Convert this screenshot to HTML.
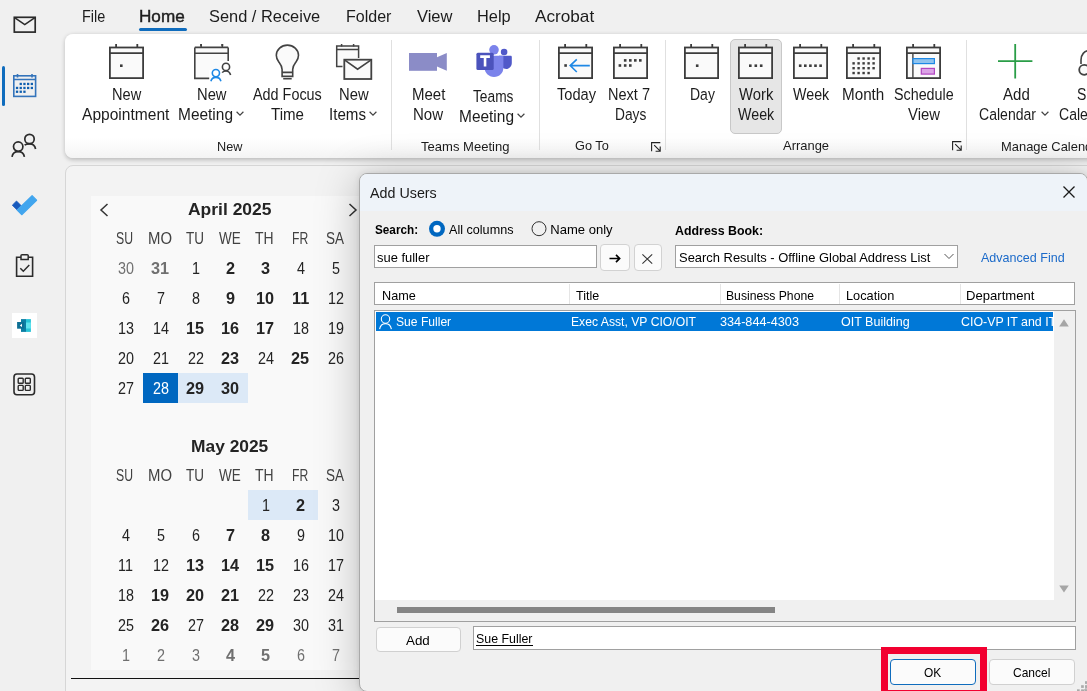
<!DOCTYPE html><html><head><meta charset="utf-8"><style>
html,body{margin:0;padding:0;}
body{width:1087px;height:691px;overflow:hidden;position:relative;background:#f0f0f0;font-family:"Liberation Sans",sans-serif;-webkit-font-smoothing:antialiased;}
.t{position:absolute;white-space:nowrap;transform-origin:0 0;filter:grayscale(1);}
.a{position:absolute;box-sizing:border-box;}
svg{position:absolute;overflow:visible;}
</style></head><body>
<div class="t" style="left:82.00px;top:8.12px;font-size:17.39px;line-height:17.39px;color:#1c1c1c;transform:scaleX(0.8315);">File</div>
<div class="t" style="left:139.10px;top:8.12px;font-size:17.39px;line-height:17.39px;color:#1c1c1c;transform:scaleX(0.9852);-webkit-text-stroke:0.45px #242424;">Home</div>
<div class="a" style="left:139px;top:28px;width:48px;height:3px;background:#0f6cbd;border-radius:1.5px"></div>
<div class="t" style="left:209.20px;top:8.12px;font-size:17.39px;line-height:17.39px;color:#1c1c1c;transform:scaleX(0.9437);">Send / Receive</div>
<div class="t" style="left:345.90px;top:8.12px;font-size:17.39px;line-height:17.39px;color:#1c1c1c;transform:scaleX(0.9231);">Folder</div>
<div class="t" style="left:416.60px;top:8.12px;font-size:17.39px;line-height:17.39px;color:#1c1c1c;transform:scaleX(0.9497);">View</div>
<div class="t" style="left:476.70px;top:8.12px;font-size:17.39px;line-height:17.39px;color:#1c1c1c;transform:scaleX(0.9422);">Help</div>
<div class="t" style="left:535.30px;top:8.12px;font-size:17.39px;line-height:17.39px;color:#1c1c1c;transform:scaleX(0.9878);">Acrobat</div>
<div class="a" style="left:65px;top:34px;width:1040px;height:124px;background:linear-gradient(to bottom,#fff 0%,#fff 84%,#f4f4f4 100%);border-radius:8px;box-shadow:0 1.5px 4px rgba(0,0,0,0.22)"></div>
<div class="a" style="left:391.0px;top:40px;width:1px;height:110px;background:#e0e0e0"></div>
<div class="a" style="left:538.8px;top:40px;width:1px;height:110px;background:#e0e0e0"></div>
<div class="a" style="left:664.9px;top:40px;width:1px;height:110px;background:#e0e0e0"></div>
<div class="a" style="left:966.0px;top:40px;width:1px;height:110px;background:#e0e0e0"></div>
<div class="t" style="left:111.60px;top:87.25px;font-size:15.94px;line-height:15.94px;color:#1c1c1c;transform:scaleX(0.9156);">New</div>
<div class="t" style="left:82.20px;top:107.25px;font-size:15.94px;line-height:15.94px;color:#1c1c1c;transform:scaleX(0.9765);">Appointment</div>
<div class="t" style="left:197.05px;top:87.25px;font-size:15.94px;line-height:15.94px;color:#1c1c1c;transform:scaleX(0.9250);">New</div>
<div class="t" style="left:177.60px;top:107.25px;font-size:15.94px;line-height:15.94px;color:#1c1c1c;transform:scaleX(0.9698);">Meeting</div>
<div class="t" style="left:253.00px;top:87.25px;font-size:15.94px;line-height:15.94px;color:#1c1c1c;transform:scaleX(0.9029);">Add Focus</div>
<div class="t" style="left:271.00px;top:107.25px;font-size:15.94px;line-height:15.94px;color:#1c1c1c;transform:scaleX(0.9474);">Time</div>
<div class="t" style="left:339.30px;top:87.25px;font-size:15.94px;line-height:15.94px;color:#1c1c1c;transform:scaleX(0.9281);">New</div>
<div class="t" style="left:329.00px;top:107.25px;font-size:15.94px;line-height:15.94px;color:#1c1c1c;transform:scaleX(0.9494);">Items</div>
<div class="t" style="left:217.40px;top:139.54px;font-size:13.48px;line-height:13.48px;color:#1c1c1c;transform:scaleX(0.9420);">New</div>
<div class="t" style="left:411.60px;top:87.25px;font-size:15.94px;line-height:15.94px;color:#1c1c1c;transform:scaleX(0.9425);">Meet</div>
<div class="t" style="left:412.70px;top:107.25px;font-size:15.94px;line-height:15.94px;color:#1c1c1c;transform:scaleX(0.9438);">Now</div>
<div class="t" style="left:473.20px;top:89.25px;font-size:15.94px;line-height:15.94px;color:#1c1c1c;transform:scaleX(0.8626);">Teams</div>
<div class="t" style="left:458.70px;top:109.25px;font-size:15.94px;line-height:15.94px;color:#1c1c1c;transform:scaleX(0.9698);">Meeting</div>
<div class="t" style="left:421.20px;top:139.54px;font-size:13.48px;line-height:13.48px;color:#1c1c1c;transform:scaleX(0.9684);">Teams Meeting</div>
<div class="t" style="left:556.60px;top:87.25px;font-size:15.94px;line-height:15.94px;color:#1c1c1c;transform:scaleX(0.9192);">Today</div>
<div class="t" style="left:608.40px;top:87.25px;font-size:15.94px;line-height:15.94px;color:#1c1c1c;transform:scaleX(0.9116);">Next 7</div>
<div class="t" style="left:614.50px;top:107.25px;font-size:15.94px;line-height:15.94px;color:#1c1c1c;transform:scaleX(0.8618);">Days</div>
<div class="t" style="left:575.30px;top:138.54px;font-size:13.48px;line-height:13.48px;color:#1c1c1c;transform:scaleX(0.9464);">Go To</div>
<div class="a" style="left:730px;top:38.5px;width:52px;height:95px;background:#e6e6e6;border:1px solid #c8c8c8;border-radius:5px"></div>
<div class="t" style="left:689.80px;top:87.25px;font-size:15.94px;line-height:15.94px;color:#1c1c1c;transform:scaleX(0.8783);">Day</div>
<div class="t" style="left:739.20px;top:87.25px;font-size:15.94px;line-height:15.94px;color:#1c1c1c;transform:scaleX(0.9295);">Work</div>
<div class="t" style="left:738.20px;top:107.25px;font-size:15.94px;line-height:15.94px;color:#1c1c1c;transform:scaleX(0.8947);">Week</div>
<div class="t" style="left:792.50px;top:87.25px;font-size:15.94px;line-height:15.94px;color:#1c1c1c;transform:scaleX(0.8947);">Week</div>
<div class="t" style="left:842.30px;top:87.25px;font-size:15.94px;line-height:15.94px;color:#1c1c1c;transform:scaleX(0.9548);">Month</div>
<div class="t" style="left:894.20px;top:87.25px;font-size:15.94px;line-height:15.94px;color:#1c1c1c;transform:scaleX(0.8981);">Schedule</div>
<div class="t" style="left:908.10px;top:107.25px;font-size:15.94px;line-height:15.94px;color:#1c1c1c;transform:scaleX(0.9310);">View</div>
<div class="t" style="left:782.60px;top:138.54px;font-size:13.48px;line-height:13.48px;color:#1c1c1c;transform:scaleX(0.9615);">Arrange</div>
<div class="t" style="left:1002.50px;top:87.25px;font-size:15.94px;line-height:15.94px;color:#1c1c1c;transform:scaleX(0.9448);">Add</div>
<div class="t" style="left:979.00px;top:107.25px;font-size:15.94px;line-height:15.94px;color:#1c1c1c;transform:scaleX(0.8811);">Calendar</div>
<div class="t" style="left:1000.70px;top:139.54px;font-size:13.48px;line-height:13.48px;color:#1c1c1c;transform:scaleX(0.9600);">Manage Calendars</div>
<div class="t" style="left:1077.20px;top:87.25px;font-size:15.94px;line-height:15.94px;color:#1c1c1c;transform:scaleX(0.8800);">Share</div>
<div class="t" style="left:1059.10px;top:107.25px;font-size:15.94px;line-height:15.94px;color:#1c1c1c;transform:scaleX(0.8811);">Calendar</div>
<svg style="left:108.5px;top:44.2px" width="36" height="36" viewBox="0 0 36 36"><rect x="0.9" y="3.5" width="33.2" height="30.6" fill="#fafafa" stroke="#3c3c3c" stroke-width="1.8"/><path d="M0.9 9.2H34.1M7.1 0V4M28.3 0V4" stroke="#3c3c3c" stroke-width="1.8" fill="none"/><rect x="11.00" y="20.40" width="2.6" height="2.6" fill="#3c3c3c"/></svg>
<svg style="left:194.4px;top:44.4px" width="36" height="36" viewBox="0 0 36 36"><rect x="0.9" y="3.5" width="33.2" height="30.6" fill="#fafafa" stroke="#3c3c3c" stroke-width="1.8"/><path d="M0.9 9.2H34.1M7.1 0V4M28.3 0V4" stroke="#3c3c3c" stroke-width="1.8" fill="none"/><rect x="0" y="2" width="36" height="34" fill="#fff"/><path d="M0.8 3.4H34.2V17.1H26V26H15.2V34.4H0.8Z" fill="#fafafa"/><path d="M0.8 3.4H34.2M15.2 34.4H0.8V3.4M34.2 3.4V17.1" stroke="#424242" stroke-width="1.6" fill="none"/><path d="M0.8 9.2H34.2M7.1 0V4M28.3 0V4" stroke="#424242" stroke-width="1.6" fill="none"/><circle cx="21.9" cy="29.1" r="3.6" fill="none" stroke="#1e88e5" stroke-width="1.6"/><path d="M16.9 37.2C17.6 34.6 19.5 33.4 21.9 33.4S26.2 34.6 26.9 37.2" fill="none" stroke="#1e88e5" stroke-width="1.6"/><circle cx="32" cy="22.9" r="3.6" fill="none" stroke="#424242" stroke-width="1.6"/><path d="M28.2 28.6C29 27.5 30.4 27 32 27S35.6 27.7 36.6 31" fill="none" stroke="#424242" stroke-width="1.6"/></svg>
<svg style="left:274px;top:43px" width="28" height="38" viewBox="0 0 28 38"><path d="M8.1 29.4V26.6C8.1 23 6.8 21.6 4.8 19C3.2 17 2.3 14.7 2.3 12.3C2.3 6.6 7.4 2.1 13.4 2.1S24.5 6.6 24.5 12.3C24.5 14.7 23.6 17 22 19C20 21.6 18.7 23 18.7 26.6V33.4H8.1V29.4Z" fill="#fafafa" stroke="#424242" stroke-width="1.6"/><path d="M8.1 29.4H18.7M9.2 35.7H17.7" stroke="#424242" stroke-width="1.6"/></svg>
<svg style="left:336px;top:44px" width="37" height="37" viewBox="0 0 37 37"><path d="M6.5 22.4H0.7V1.9H22.6V13.9" fill="#fafafa" stroke="#424242" stroke-width="1.5"/><path d="M0.7 5.6H22.6M5.6 0V2.6M17.6 0V2.6" stroke="#424242" stroke-width="1.5"/><rect x="8.3" y="15.7" width="27" height="19.3" fill="#fafafa" stroke="#424242" stroke-width="1.8"/><path d="M8.8 16.2L21.6 25.2L34.8 16.2" fill="none" stroke="#424242" stroke-width="1.6"/></svg>
<svg style="left:409px;top:53px" width="38" height="18" viewBox="0 0 38 18"><rect x="0" y="0" width="28" height="17.8" fill="#8b8cc7"/><path d="M28 4.2L37.8 0V17.8L28 13.6Z" fill="#8b8cc7"/></svg>
<svg style="left:475.8px;top:45px" width="36" height="33" viewBox="0 0 36 33"><circle cx="18" cy="4.8" r="4.8" fill="#7b83eb"/><circle cx="28.1" cy="7" r="3.3" fill="#5059c9"/><path d="M23 10.8H34.6C35.3 10.8 35.8 11.3 35.8 12V18.3C35.8 21.4 33.3 23.9 30.2 23.9S24.6 21.4 24.6 18.3Z" fill="#5059c9"/><path d="M8.5 10.8H27.4V22.5C27.4 28.3 23.3 31.9 18 31.9S8.5 27.8 8.5 22.5Z" fill="#7b83eb"/><rect x="0.4" y="7.8" width="17.3" height="17.3" rx="1.5" fill="#4b53bc"/><path d="M4.2 11.6H13.9M9.05 11.6V21.5" stroke="#fff" stroke-width="2.6"/></svg>
<svg style="left:558.3px;top:44.3px" width="36" height="36" viewBox="0 0 36 36"><rect x="0.9" y="3.5" width="33.2" height="30.6" fill="#fafafa" stroke="#3c3c3c" stroke-width="1.8"/><path d="M0.9 9.2H34.1M7.1 0V4M28.3 0V4" stroke="#3c3c3c" stroke-width="1.8" fill="none"/><rect x="6.30" y="20.20" width="2.6" height="2.6" fill="#3c3c3c"/><path d="M12.2 21.6H31.8M18.8 15.3L12.2 21.6L18.8 28" fill="none" stroke="#1e88e5" stroke-width="1.6"/></svg>
<svg style="left:612.7px;top:44.3px" width="36" height="36" viewBox="0 0 36 36"><rect x="0.9" y="3.5" width="33.2" height="30.6" fill="#fafafa" stroke="#3c3c3c" stroke-width="1.8"/><path d="M0.9 9.2H34.1M7.1 0V4M28.3 0V4" stroke="#3c3c3c" stroke-width="1.8" fill="none"/><rect x="10.90" y="15.10" width="2.6" height="2.6" fill="#3c3c3c"/><rect x="16.00" y="15.10" width="2.6" height="2.6" fill="#3c3c3c"/><rect x="21.00" y="15.10" width="2.6" height="2.6" fill="#3c3c3c"/><rect x="26.00" y="15.10" width="2.6" height="2.6" fill="#3c3c3c"/><rect x="5.60" y="20.20" width="2.6" height="2.6" fill="#3c3c3c"/><rect x="10.90" y="20.20" width="2.6" height="2.6" fill="#3c3c3c"/><rect x="16.00" y="20.20" width="2.6" height="2.6" fill="#3c3c3c"/></svg>
<svg style="left:684px;top:44.2px" width="36" height="36" viewBox="0 0 36 36"><rect x="0.9" y="3.5" width="33.2" height="30.6" fill="#fafafa" stroke="#3c3c3c" stroke-width="1.8"/><path d="M0.9 9.2H34.1M7.1 0V4M28.3 0V4" stroke="#3c3c3c" stroke-width="1.8" fill="none"/><rect x="11.90" y="20.40" width="2.6" height="2.6" fill="#3c3c3c"/></svg>
<svg style="left:738.2px;top:44.2px" width="36" height="36" viewBox="0 0 36 36"><rect x="0.9" y="3.5" width="33.2" height="30.6" fill="#fafafa" stroke="#3c3c3c" stroke-width="1.8"/><path d="M0.9 9.2H34.1M7.1 0V4M28.3 0V4" stroke="#3c3c3c" stroke-width="1.8" fill="none"/><rect x="11.00" y="20.40" width="2.6" height="2.6" fill="#3c3c3c"/><rect x="16.50" y="20.40" width="2.6" height="2.6" fill="#3c3c3c"/><rect x="21.90" y="20.40" width="2.6" height="2.6" fill="#3c3c3c"/></svg>
<svg style="left:792.5px;top:44.2px" width="36" height="36" viewBox="0 0 36 36"><rect x="0.9" y="3.5" width="33.2" height="30.6" fill="#fafafa" stroke="#3c3c3c" stroke-width="1.8"/><path d="M0.9 9.2H34.1M7.1 0V4M28.3 0V4" stroke="#3c3c3c" stroke-width="1.8" fill="none"/><rect x="5.90" y="20.40" width="2.6" height="2.6" fill="#3c3c3c"/><rect x="11.00" y="20.40" width="2.6" height="2.6" fill="#3c3c3c"/><rect x="16.10" y="20.40" width="2.6" height="2.6" fill="#3c3c3c"/><rect x="21.20" y="20.40" width="2.6" height="2.6" fill="#3c3c3c"/><rect x="26.30" y="20.40" width="2.6" height="2.6" fill="#3c3c3c"/></svg>
<svg style="left:846.3px;top:44.2px" width="36" height="36" viewBox="0 0 36 36"><rect x="0.9" y="3.5" width="33.2" height="30.6" fill="#fafafa" stroke="#3c3c3c" stroke-width="1.8"/><path d="M0.9 9.2H34.1M7.1 0V4M28.3 0V4" stroke="#3c3c3c" stroke-width="1.8" fill="none"/><rect x="11.40" y="13.30" width="2.4" height="2.4" fill="#3c3c3c"/><rect x="16.40" y="13.30" width="2.4" height="2.4" fill="#3c3c3c"/><rect x="21.40" y="13.30" width="2.4" height="2.4" fill="#3c3c3c"/><rect x="26.40" y="13.30" width="2.4" height="2.4" fill="#3c3c3c"/><rect x="6.40" y="18.15" width="2.4" height="2.4" fill="#3c3c3c"/><rect x="11.40" y="18.15" width="2.4" height="2.4" fill="#3c3c3c"/><rect x="16.40" y="18.15" width="2.4" height="2.4" fill="#3c3c3c"/><rect x="21.40" y="18.15" width="2.4" height="2.4" fill="#3c3c3c"/><rect x="26.40" y="18.15" width="2.4" height="2.4" fill="#3c3c3c"/><rect x="6.40" y="23.00" width="2.4" height="2.4" fill="#3c3c3c"/><rect x="11.40" y="23.00" width="2.4" height="2.4" fill="#3c3c3c"/><rect x="16.40" y="23.00" width="2.4" height="2.4" fill="#3c3c3c"/><rect x="21.40" y="23.00" width="2.4" height="2.4" fill="#3c3c3c"/><rect x="26.40" y="23.00" width="2.4" height="2.4" fill="#3c3c3c"/><rect x="6.40" y="27.85" width="2.4" height="2.4" fill="#3c3c3c"/><rect x="11.40" y="27.85" width="2.4" height="2.4" fill="#3c3c3c"/><rect x="16.40" y="27.85" width="2.4" height="2.4" fill="#3c3c3c"/><rect x="21.40" y="27.85" width="2.4" height="2.4" fill="#3c3c3c"/></svg>
<svg style="left:906.3px;top:44.2px" width="36" height="36" viewBox="0 0 36 36"><rect x="0.9" y="3.5" width="33.2" height="30.6" fill="#fafafa" stroke="#3c3c3c" stroke-width="1.8"/><path d="M0.9 9.2H34.1M7.1 0V4M28.3 0V4" stroke="#3c3c3c" stroke-width="1.8" fill="none"/><path d="M6.9 9.2V34" stroke="#424242" stroke-width="1.4"/><rect x="7" y="14.6" width="21.4" height="5" fill="#8fc3ee" stroke="#1e88e5" stroke-width="1.2"/><rect x="15.3" y="24.4" width="13.1" height="5.7" fill="#dba3e6" stroke="#b146c2" stroke-width="1.2"/></svg>
<svg style="left:998px;top:44px" width="35" height="35" viewBox="0 0 35 35"><path d="M0 17.2H34.4M17.2 0V34.4" stroke="#2a9d47" stroke-width="1.8"/></svg>
<svg style="left:1076px;top:49px" width="20" height="30" viewBox="0 0 20 30"><path d="M14 1.5C8 1.5 5 6 5 11V15" fill="none" stroke="#424242" stroke-width="1.6"/><circle cx="8.2" cy="20.8" r="5" fill="#fafafa" stroke="#424242" stroke-width="1.8"/></svg>
<svg style="left:236px;top:111px" width="8" height="5" viewBox="0 0 8 5"><path d="M0.6 0.8L4 4.1L7.4 0.8" fill="none" stroke="#424242" stroke-width="1.2"/></svg>
<svg style="left:368.5px;top:111px" width="8" height="5" viewBox="0 0 8 5"><path d="M0.6 0.8L4 4.1L7.4 0.8" fill="none" stroke="#424242" stroke-width="1.2"/></svg>
<svg style="left:516.5px;top:113px" width="8" height="5" viewBox="0 0 8 5"><path d="M0.6 0.8L4 4.1L7.4 0.8" fill="none" stroke="#424242" stroke-width="1.2"/></svg>
<svg style="left:1041px;top:111px" width="8" height="5" viewBox="0 0 8 5"><path d="M0.6 0.8L4 4.1L7.4 0.8" fill="none" stroke="#424242" stroke-width="1.2"/></svg>
<svg style="left:651.3px;top:141.5px" width="10" height="10" viewBox="0 0 10 10"><path d="M0.6 9.3V0.6H9.3M3.2 3.2L9.2 9.2M9.2 4.6V9.2H4.6" fill="none" stroke="#242424" stroke-width="1.1"/></svg>
<svg style="left:952px;top:141.3px" width="10" height="10" viewBox="0 0 10 10"><path d="M0.6 9.3V0.6H9.3M3.2 3.2L9.2 9.2M9.2 4.6V9.2H4.6" fill="none" stroke="#242424" stroke-width="1.1"/></svg>
<svg style="left:13px;top:16px" width="24" height="18" viewBox="0 0 24 18"><rect x="1.3" y="1.3" width="20.9" height="14.8" fill="none" stroke="#2b2b2b" stroke-width="1.7"/><path d="M1.6 1.6L11.75 8.6L21.9 1.6" fill="none" stroke="#2b2b2b" stroke-width="1.6"/></svg>
<div class="a" style="left:2px;top:66px;width:3px;height:40px;background:#0f6cbd;border-radius:1.5px"></div>
<svg style="left:13px;top:74px" width="24" height="24" viewBox="0 0 24 24"><rect x="0.8" y="1.8" width="21.8" height="20.6" fill="none" stroke="#3474bb" stroke-width="1.6"/><path d="M0.8 5.5H22.6M4.5 0V3.5M19 0V3.5" stroke="#3474bb" stroke-width="1.6"/><rect x="6.60" y="8.80" width="2.3" height="2.3" fill="#0f5fb0"/><rect x="10.30" y="8.80" width="2.3" height="2.3" fill="#0f5fb0"/><rect x="14.00" y="8.80" width="2.3" height="2.3" fill="#0f5fb0"/><rect x="17.70" y="8.80" width="2.3" height="2.3" fill="#0f5fb0"/><rect x="2.90" y="12.80" width="2.3" height="2.3" fill="#0f5fb0"/><rect x="6.60" y="12.80" width="2.3" height="2.3" fill="#0f5fb0"/><rect x="10.30" y="12.80" width="2.3" height="2.3" fill="#0f5fb0"/><rect x="14.00" y="12.80" width="2.3" height="2.3" fill="#0f5fb0"/><rect x="17.70" y="12.80" width="2.3" height="2.3" fill="#0f5fb0"/><rect x="2.90" y="16.60" width="2.3" height="2.3" fill="#0f5fb0"/><rect x="6.60" y="16.60" width="2.3" height="2.3" fill="#0f5fb0"/><rect x="10.30" y="16.60" width="2.3" height="2.3" fill="#0f5fb0"/></svg>
<svg style="left:11px;top:133px" width="26" height="25" viewBox="0 0 26 25"><circle cx="7.2" cy="13.6" r="4.7" fill="none" stroke="#2b2b2b" stroke-width="1.7"/><path d="M1 23.8C1.6 20.4 4 18.6 7.2 18.6S12.8 20.4 13.4 23.8" fill="none" stroke="#2b2b2b" stroke-width="1.7"/><circle cx="18.5" cy="6" r="4.7" fill="none" stroke="#2b2b2b" stroke-width="1.7"/><path d="M13.6 12.2C14.6 11.3 16.4 10.9 18.5 10.9C21.7 10.9 24 12.8 24.6 16" fill="none" stroke="#2b2b2b" stroke-width="1.7"/></svg>
<svg style="left:5px;top:190px" width="40" height="30" viewBox="0 0 40 30"><path d="M7.3 15.2L11.5 11L16.1 15.6L11.9 19.8Z" fill="#185abd" stroke="#185abd" stroke-width="0.8" stroke-linejoin="round"/><path d="M27.1 5.7L31.6 10.2L16.7 24.7L12.2 20.2Z" fill="#41a5ee" stroke="#41a5ee" stroke-width="1.2" stroke-linejoin="round"/></svg>
<svg style="left:15px;top:254px" width="20" height="24" viewBox="0 0 20 24"><path d="M6 3.2H1.6V22.2H17.6V3.2H13.2" fill="none" stroke="#2b2b2b" stroke-width="1.6"/><path d="M6 5.6V1.6C6 1 6.5 0.8 7 0.8H12.2C12.7 0.8 13.2 1 13.2 1.6V5.6Z" fill="none" stroke="#2b2b2b" stroke-width="1.5"/><path d="M5.3 14.2L8.3 17.2L14.3 11" fill="none" stroke="#2b2b2b" stroke-width="1.5"/></svg>
<div class="a" style="left:12px;top:313px;width:25px;height:25px;background:#fff"></div>
<svg style="left:0px;top:300px" width="40" height="40" viewBox="0 300 40 40"><rect x="21" y="319.1" width="5" height="12.8" fill="#0b7ea3"/><rect x="26" y="319.1" width="4.9" height="12.8" fill="#27c3d6"/><rect x="26" y="322.5" width="4.9" height="6" fill="#5fe3ee"/><rect x="17.1" y="322" width="6.9" height="6.7" fill="#0d6f94"/><path d="M19.8 325.4L22 323.8V327Z" fill="#fff"/></svg>
<svg style="left:13px;top:373px" width="23" height="23" viewBox="0 0 23 23"><rect x="1" y="1" width="20.5" height="20.8" rx="3" fill="none" stroke="#2b2b2b" stroke-width="1.6"/><rect x="5.2" y="5.2" width="5" height="5" rx="0.8" fill="none" stroke="#2b2b2b" stroke-width="1.4"/><rect x="12.3" y="5.2" width="5" height="5" rx="0.8" fill="none" stroke="#2b2b2b" stroke-width="1.4"/><rect x="5.2" y="12.4" width="5" height="5" rx="0.8" fill="none" stroke="#2b2b2b" stroke-width="1.4"/><rect x="12.3" y="12.4" width="5" height="5" rx="0.8" fill="none" stroke="#2b2b2b" stroke-width="1.4"/></svg>
<div class="a" style="left:65px;top:165px;width:1100px;height:540px;background:#f3f3f3;border:1px solid #d6d6d6;border-radius:8px"></div>
<div class="a" style="left:91px;top:195.7px;width:275px;height:474.3px;background:#f9f9f9"></div>
<div class="a" style="left:71px;top:677.6px;width:289px;height:1.6px;background:#111"></div>

<div class="a" style="left:143px;top:373px;width:35px;height:30px;background:#0067c0"></div>
<div class="a" style="left:178px;top:373px;width:70px;height:30px;background:#dce9f7"></div>
<div class="t" style="left:187.50px;top:201.26px;font-size:17.10px;line-height:17.10px;color:#242424;font-weight:bold;transform:scaleX(1.0215);">April 2025</div>
<div class="t" style="left:116.40px;top:231.25px;font-size:15.94px;line-height:15.94px;color:#424242;transform:scaleX(0.7676);">SU</div>
<div class="t" style="left:148.10px;top:231.25px;font-size:15.94px;line-height:15.94px;color:#424242;transform:scaleX(0.9346);">MO</div>
<div class="t" style="left:186.00px;top:231.25px;font-size:15.94px;line-height:15.94px;color:#424242;transform:scaleX(0.8470);">TU</div>
<div class="t" style="left:219.00px;top:231.25px;font-size:15.94px;line-height:15.94px;color:#424242;transform:scaleX(0.8489);">WE</div>
<div class="t" style="left:255.00px;top:231.25px;font-size:15.94px;line-height:15.94px;color:#424242;transform:scaleX(0.8753);">TH</div>
<div class="t" style="left:292.40px;top:231.25px;font-size:15.94px;line-height:15.94px;color:#424242;transform:scaleX(0.7623);">FR</div>
<div class="t" style="left:325.90px;top:231.25px;font-size:15.94px;line-height:15.94px;color:#424242;transform:scaleX(0.8464);">SA</div>
<div class="t" style="left:117.52px;top:261.25px;font-size:15.94px;line-height:15.94px;color:#707070;transform:scaleX(0.9000);">30</div>
<div class="t" style="left:151.46px;top:261.25px;font-size:15.94px;line-height:15.94px;color:#707070;font-weight:bold;transform:scaleX(1.0200);">31</div>
<div class="t" style="left:191.51px;top:261.25px;font-size:15.94px;line-height:15.94px;color:#242424;transform:scaleX(0.9000);">1</div>
<div class="t" style="left:225.98px;top:261.25px;font-size:15.94px;line-height:15.94px;color:#242424;font-weight:bold;transform:scaleX(1.0200);">2</div>
<div class="t" style="left:260.98px;top:261.25px;font-size:15.94px;line-height:15.94px;color:#242424;font-weight:bold;transform:scaleX(1.0200);">3</div>
<div class="t" style="left:296.51px;top:261.25px;font-size:15.94px;line-height:15.94px;color:#242424;transform:scaleX(0.9000);">4</div>
<div class="t" style="left:331.51px;top:261.25px;font-size:15.94px;line-height:15.94px;color:#242424;transform:scaleX(0.9000);">5</div>
<div class="t" style="left:121.51px;top:291.25px;font-size:15.94px;line-height:15.94px;color:#242424;transform:scaleX(0.9000);">6</div>
<div class="t" style="left:156.51px;top:291.25px;font-size:15.94px;line-height:15.94px;color:#242424;transform:scaleX(0.9000);">7</div>
<div class="t" style="left:191.51px;top:291.25px;font-size:15.94px;line-height:15.94px;color:#242424;transform:scaleX(0.9000);">8</div>
<div class="t" style="left:225.98px;top:291.25px;font-size:15.94px;line-height:15.94px;color:#242424;font-weight:bold;transform:scaleX(1.0200);">9</div>
<div class="t" style="left:256.46px;top:291.25px;font-size:15.94px;line-height:15.94px;color:#242424;font-weight:bold;transform:scaleX(1.0200);">10</div>
<div class="t" style="left:291.91px;top:291.25px;font-size:15.94px;line-height:15.94px;color:#242424;font-weight:bold;transform:scaleX(1.0200);">11</div>
<div class="t" style="left:327.52px;top:291.25px;font-size:15.94px;line-height:15.94px;color:#242424;transform:scaleX(0.9000);">12</div>
<div class="t" style="left:117.52px;top:321.25px;font-size:15.94px;line-height:15.94px;color:#242424;transform:scaleX(0.9000);">13</div>
<div class="t" style="left:152.52px;top:321.25px;font-size:15.94px;line-height:15.94px;color:#242424;transform:scaleX(0.9000);">14</div>
<div class="t" style="left:186.46px;top:321.25px;font-size:15.94px;line-height:15.94px;color:#242424;font-weight:bold;transform:scaleX(1.0200);">15</div>
<div class="t" style="left:221.46px;top:321.25px;font-size:15.94px;line-height:15.94px;color:#242424;font-weight:bold;transform:scaleX(1.0200);">16</div>
<div class="t" style="left:256.46px;top:321.25px;font-size:15.94px;line-height:15.94px;color:#242424;font-weight:bold;transform:scaleX(1.0200);">17</div>
<div class="t" style="left:292.52px;top:321.25px;font-size:15.94px;line-height:15.94px;color:#242424;transform:scaleX(0.9000);">18</div>
<div class="t" style="left:327.52px;top:321.25px;font-size:15.94px;line-height:15.94px;color:#242424;transform:scaleX(0.9000);">19</div>
<div class="t" style="left:117.52px;top:351.25px;font-size:15.94px;line-height:15.94px;color:#242424;transform:scaleX(0.9000);">20</div>
<div class="t" style="left:152.52px;top:351.25px;font-size:15.94px;line-height:15.94px;color:#242424;transform:scaleX(0.9000);">21</div>
<div class="t" style="left:187.52px;top:351.25px;font-size:15.94px;line-height:15.94px;color:#242424;transform:scaleX(0.9000);">22</div>
<div class="t" style="left:221.46px;top:351.25px;font-size:15.94px;line-height:15.94px;color:#242424;font-weight:bold;transform:scaleX(1.0200);">23</div>
<div class="t" style="left:257.52px;top:351.25px;font-size:15.94px;line-height:15.94px;color:#242424;transform:scaleX(0.9000);">24</div>
<div class="t" style="left:291.46px;top:351.25px;font-size:15.94px;line-height:15.94px;color:#242424;font-weight:bold;transform:scaleX(1.0200);">25</div>
<div class="t" style="left:327.52px;top:351.25px;font-size:15.94px;line-height:15.94px;color:#242424;transform:scaleX(0.9000);">26</div>
<div class="t" style="left:117.52px;top:381.25px;font-size:15.94px;line-height:15.94px;color:#242424;transform:scaleX(0.9000);">27</div>
<div class="t" style="left:152.52px;top:381.25px;font-size:15.94px;line-height:15.94px;color:#ffffff;transform:scaleX(0.9000);">28</div>
<div class="t" style="left:186.46px;top:381.25px;font-size:15.94px;line-height:15.94px;color:#242424;font-weight:bold;transform:scaleX(1.0200);">29</div>
<div class="t" style="left:221.46px;top:381.25px;font-size:15.94px;line-height:15.94px;color:#242424;font-weight:bold;transform:scaleX(1.0200);">30</div>
<div class="a" style="left:248px;top:490px;width:70px;height:30px;background:#dce9f7"></div>
<div class="t" style="left:190.60px;top:438.26px;font-size:17.10px;line-height:17.10px;color:#242424;font-weight:bold;transform:scaleX(1.0164);">May 2025</div>
<div class="t" style="left:116.40px;top:468.25px;font-size:15.94px;line-height:15.94px;color:#424242;transform:scaleX(0.7676);">SU</div>
<div class="t" style="left:148.10px;top:468.25px;font-size:15.94px;line-height:15.94px;color:#424242;transform:scaleX(0.9346);">MO</div>
<div class="t" style="left:186.00px;top:468.25px;font-size:15.94px;line-height:15.94px;color:#424242;transform:scaleX(0.8470);">TU</div>
<div class="t" style="left:219.00px;top:468.25px;font-size:15.94px;line-height:15.94px;color:#424242;transform:scaleX(0.8489);">WE</div>
<div class="t" style="left:255.00px;top:468.25px;font-size:15.94px;line-height:15.94px;color:#424242;transform:scaleX(0.8753);">TH</div>
<div class="t" style="left:292.40px;top:468.25px;font-size:15.94px;line-height:15.94px;color:#424242;transform:scaleX(0.7623);">FR</div>
<div class="t" style="left:325.90px;top:468.25px;font-size:15.94px;line-height:15.94px;color:#424242;transform:scaleX(0.8464);">SA</div>
<div class="t" style="left:261.51px;top:498.25px;font-size:15.94px;line-height:15.94px;color:#242424;transform:scaleX(0.9000);">1</div>
<div class="t" style="left:295.98px;top:498.25px;font-size:15.94px;line-height:15.94px;color:#242424;font-weight:bold;transform:scaleX(1.0200);">2</div>
<div class="t" style="left:331.51px;top:498.25px;font-size:15.94px;line-height:15.94px;color:#242424;transform:scaleX(0.9000);">3</div>
<div class="t" style="left:121.51px;top:528.25px;font-size:15.94px;line-height:15.94px;color:#242424;transform:scaleX(0.9000);">4</div>
<div class="t" style="left:156.51px;top:528.25px;font-size:15.94px;line-height:15.94px;color:#242424;transform:scaleX(0.9000);">5</div>
<div class="t" style="left:191.51px;top:528.25px;font-size:15.94px;line-height:15.94px;color:#242424;transform:scaleX(0.9000);">6</div>
<div class="t" style="left:225.98px;top:528.25px;font-size:15.94px;line-height:15.94px;color:#242424;font-weight:bold;transform:scaleX(1.0200);">7</div>
<div class="t" style="left:260.98px;top:528.25px;font-size:15.94px;line-height:15.94px;color:#242424;font-weight:bold;transform:scaleX(1.0200);">8</div>
<div class="t" style="left:296.51px;top:528.25px;font-size:15.94px;line-height:15.94px;color:#242424;transform:scaleX(0.9000);">9</div>
<div class="t" style="left:327.52px;top:528.25px;font-size:15.94px;line-height:15.94px;color:#242424;transform:scaleX(0.9000);">10</div>
<div class="t" style="left:118.05px;top:558.25px;font-size:15.94px;line-height:15.94px;color:#242424;transform:scaleX(0.9000);">11</div>
<div class="t" style="left:152.52px;top:558.25px;font-size:15.94px;line-height:15.94px;color:#242424;transform:scaleX(0.9000);">12</div>
<div class="t" style="left:186.46px;top:558.25px;font-size:15.94px;line-height:15.94px;color:#242424;font-weight:bold;transform:scaleX(1.0200);">13</div>
<div class="t" style="left:221.46px;top:558.25px;font-size:15.94px;line-height:15.94px;color:#242424;font-weight:bold;transform:scaleX(1.0200);">14</div>
<div class="t" style="left:256.46px;top:558.25px;font-size:15.94px;line-height:15.94px;color:#242424;font-weight:bold;transform:scaleX(1.0200);">15</div>
<div class="t" style="left:292.52px;top:558.25px;font-size:15.94px;line-height:15.94px;color:#242424;transform:scaleX(0.9000);">16</div>
<div class="t" style="left:327.52px;top:558.25px;font-size:15.94px;line-height:15.94px;color:#242424;transform:scaleX(0.9000);">17</div>
<div class="t" style="left:117.52px;top:588.25px;font-size:15.94px;line-height:15.94px;color:#242424;transform:scaleX(0.9000);">18</div>
<div class="t" style="left:151.46px;top:588.25px;font-size:15.94px;line-height:15.94px;color:#242424;font-weight:bold;transform:scaleX(1.0200);">19</div>
<div class="t" style="left:186.46px;top:588.25px;font-size:15.94px;line-height:15.94px;color:#242424;font-weight:bold;transform:scaleX(1.0200);">20</div>
<div class="t" style="left:221.46px;top:588.25px;font-size:15.94px;line-height:15.94px;color:#242424;font-weight:bold;transform:scaleX(1.0200);">21</div>
<div class="t" style="left:257.52px;top:588.25px;font-size:15.94px;line-height:15.94px;color:#242424;transform:scaleX(0.9000);">22</div>
<div class="t" style="left:292.52px;top:588.25px;font-size:15.94px;line-height:15.94px;color:#242424;transform:scaleX(0.9000);">23</div>
<div class="t" style="left:327.52px;top:588.25px;font-size:15.94px;line-height:15.94px;color:#242424;transform:scaleX(0.9000);">24</div>
<div class="t" style="left:117.52px;top:618.25px;font-size:15.94px;line-height:15.94px;color:#242424;transform:scaleX(0.9000);">25</div>
<div class="t" style="left:151.46px;top:618.25px;font-size:15.94px;line-height:15.94px;color:#242424;font-weight:bold;transform:scaleX(1.0200);">26</div>
<div class="t" style="left:187.52px;top:618.25px;font-size:15.94px;line-height:15.94px;color:#242424;transform:scaleX(0.9000);">27</div>
<div class="t" style="left:221.46px;top:618.25px;font-size:15.94px;line-height:15.94px;color:#242424;font-weight:bold;transform:scaleX(1.0200);">28</div>
<div class="t" style="left:256.46px;top:618.25px;font-size:15.94px;line-height:15.94px;color:#242424;font-weight:bold;transform:scaleX(1.0200);">29</div>
<div class="t" style="left:292.52px;top:618.25px;font-size:15.94px;line-height:15.94px;color:#242424;transform:scaleX(0.9000);">30</div>
<div class="t" style="left:327.52px;top:618.25px;font-size:15.94px;line-height:15.94px;color:#242424;transform:scaleX(0.9000);">31</div>
<div class="t" style="left:121.51px;top:648.25px;font-size:15.94px;line-height:15.94px;color:#707070;transform:scaleX(0.9000);">1</div>
<div class="t" style="left:156.51px;top:648.25px;font-size:15.94px;line-height:15.94px;color:#707070;transform:scaleX(0.9000);">2</div>
<div class="t" style="left:191.51px;top:648.25px;font-size:15.94px;line-height:15.94px;color:#707070;transform:scaleX(0.9000);">3</div>
<div class="t" style="left:225.98px;top:648.25px;font-size:15.94px;line-height:15.94px;color:#707070;font-weight:bold;transform:scaleX(1.0200);">4</div>
<div class="t" style="left:260.98px;top:648.25px;font-size:15.94px;line-height:15.94px;color:#707070;font-weight:bold;transform:scaleX(1.0200);">5</div>
<div class="t" style="left:296.51px;top:648.25px;font-size:15.94px;line-height:15.94px;color:#707070;transform:scaleX(0.9000);">6</div>
<div class="t" style="left:331.51px;top:648.25px;font-size:15.94px;line-height:15.94px;color:#707070;transform:scaleX(0.9000);">7</div>
<svg style="left:99px;top:203px" width="10" height="14" viewBox="0 0 10 14"><path d="M8.5 1L2 7L8.5 13" fill="none" stroke="#333" stroke-width="1.5"/></svg>
<svg style="left:348px;top:203px" width="10" height="14" viewBox="0 0 10 14"><path d="M1.5 1L8 7L1.5 13" fill="none" stroke="#333" stroke-width="1.5"/></svg>
<div class="a" style="left:359px;top:173px;width:728.5px;height:519px;background:#f0f0f0;border:1px solid #a9a9a9;border-radius:8px;overflow:hidden;box-shadow:0 6px 44px rgba(0,0,0,0.26),0 0 6px rgba(0,0,0,0.10)"><div style="position:absolute;left:0;top:0;right:0;height:37px;background:#eef3f9"></div></div>
<div class="t" style="left:370.20px;top:184.99px;font-size:15.07px;line-height:15.07px;color:#1a1a1a;transform:scaleX(0.9494);">Add Users</div>
<svg style="left:1063px;top:186px" width="12" height="12" viewBox="0 0 12 12"><path d="M0.5 0.5L11.5 11.5M11.5 0.5L0.5 11.5" stroke="#1a1a1a" stroke-width="1.3"/></svg>
<div class="t" style="left:374.50px;top:222.71px;font-size:13.04px;line-height:13.04px;color:#000;font-weight:bold;transform:scaleX(0.9008);">Search:</div>
<svg style="left:429px;top:221px" width="16" height="16" viewBox="0 0 16 16"><circle cx="8" cy="7.8" r="8" fill="#0067c0"/><circle cx="8" cy="7.8" r="3.7" fill="#fff"/></svg>
<div class="t" style="left:448.50px;top:222.71px;font-size:13.04px;line-height:13.04px;color:#000;transform:scaleX(0.9672);">All columns</div>
<svg style="left:531px;top:221px" width="16" height="16" viewBox="0 0 16 16"><circle cx="8" cy="7.7" r="7" fill="none" stroke="#333" stroke-width="1"/></svg>
<div class="t" style="left:550.30px;top:222.71px;font-size:13.04px;line-height:13.04px;color:#000;">Name only</div>
<div class="t" style="left:675.30px;top:223.51px;font-size:13.04px;line-height:13.04px;color:#000;font-weight:bold;transform:scaleX(0.9508);">Address Book:</div>
<div class="a" style="left:374.3px;top:245.3px;width:223.2px;height:23px;background:#fff;border:1px solid #a0a0a0"></div>
<div class="t" style="left:377.30px;top:251.41px;font-size:13.04px;line-height:13.04px;color:#000;transform:scaleX(0.9920);">sue fuller</div>
<div class="a" style="left:599.8px;top:244.4px;width:30.3px;height:26.5px;background:#fbfbfb;border:1px solid #d2d2d2;border-radius:4px"></div>
<svg style="left:609px;top:254px" width="12" height="9" viewBox="0 0 12 9"><path d="M0.5 4.5H10.6M7 0.9L10.6 4.5L7 8.1" fill="none" stroke="#000" stroke-width="1.7"/></svg>
<div class="a" style="left:633.6px;top:244.4px;width:28.8px;height:26.5px;background:#fbfbfb;border:1px solid #d2d2d2;border-radius:4px"></div>
<svg style="left:642.2px;top:253.5px" width="11" height="10" viewBox="0 0 11 10"><path d="M0.4 0.4L10.2 9.6M10.2 0.4L0.4 9.6" stroke="#333" stroke-width="1.1"/></svg>
<div class="a" style="left:675.3px;top:245.2px;width:283px;height:22.4px;background:#fff;border:1px solid #a0a0a0"></div>
<div class="t" style="left:679.40px;top:251.21px;font-size:13.04px;line-height:13.04px;color:#000;transform:scaleX(0.9926);">Search Results - Offline Global Address List</div>
<svg style="left:944px;top:253px" width="10" height="7" viewBox="0 0 10 7"><path d="M0.5 1L5 5.5L9.5 1" fill="none" stroke="#555" stroke-width="1"/></svg>
<div class="t" style="left:980.70px;top:251.01px;font-size:13.04px;line-height:13.04px;color:#1b6ac9;transform:scaleX(0.9620);filter:none;">Advanced Find</div>
<div class="a" style="left:374.1px;top:282.4px;width:701.3px;height:23px;background:#fff;border:1px solid #a0a0a0"></div>
<div class="a" style="left:569.3px;top:284px;width:1px;height:20px;background:#e5e5e5"></div>
<div class="a" style="left:719.5px;top:284px;width:1px;height:20px;background:#e5e5e5"></div>
<div class="a" style="left:839.3px;top:284px;width:1px;height:20px;background:#e5e5e5"></div>
<div class="a" style="left:959.5px;top:284px;width:1px;height:20px;background:#e5e5e5"></div>
<div class="t" style="left:382.40px;top:289.21px;font-size:13.04px;line-height:13.04px;color:#000;transform:scaleX(0.9715);">Name</div>
<div class="t" style="left:576.30px;top:289.21px;font-size:13.04px;line-height:13.04px;color:#000;transform:scaleX(0.9604);">Title</div>
<div class="t" style="left:726.20px;top:289.21px;font-size:13.04px;line-height:13.04px;color:#000;transform:scaleX(0.9336);">Business Phone</div>
<div class="t" style="left:846.30px;top:289.21px;font-size:13.04px;line-height:13.04px;color:#000;transform:scaleX(0.9795);">Location</div>
<div class="t" style="left:966.40px;top:289.21px;font-size:13.04px;line-height:13.04px;color:#000;transform:scaleX(1.0038);">Department</div>
<div class="a" style="left:374.1px;top:310px;width:701.5px;height:311.6px;background:#f0f0f0;border:1px solid #a0a0a0"></div>
<div class="a" style="left:375.1px;top:311px;width:678.6px;height:289px;background:#fff"></div>
<div class="a" style="left:376.2px;top:312.2px;width:676.8px;height:18.5px;background:#0078d7"></div>
<svg style="left:379px;top:314px" width="13" height="16" viewBox="0 0 13 16"><circle cx="6.5" cy="5" r="4.2" fill="none" stroke="#fff" stroke-width="1.1"/><path d="M0.6 15.2C1.2 11.5 3.5 9.6 6.5 9.6S11.8 11.5 12.4 15.2" fill="none" stroke="#fff" stroke-width="1.1"/></svg>
<div class="t" style="left:395.50px;top:314.71px;font-size:13.04px;line-height:13.04px;color:#fff;transform:scaleX(0.9286);">Sue Fuller</div>
<div class="t" style="left:570.80px;top:314.71px;font-size:13.04px;line-height:13.04px;color:#fff;transform:scaleX(0.9346);">Exec Asst, VP CIO/OIT</div>
<div class="t" style="left:720.20px;top:314.71px;font-size:13.04px;line-height:13.04px;color:#fff;transform:scaleX(0.9727);">334-844-4303</div>
<div class="t" style="left:841.00px;top:314.71px;font-size:13.04px;line-height:13.04px;color:#fff;transform:scaleX(0.9604);">OIT Building</div>
<div class="a" style="left:960px;top:312px;width:93px;height:19px;overflow:hidden">
<div class="t" style="left:0.60px;top:2.71px;font-size:13.04px;line-height:13.04px;color:#fff;transform:scaleX(0.9500);">CIO-VP IT and IT</div>
</div>
<svg style="left:1058.5px;top:318.8px" width="10" height="8" viewBox="0 0 10 8"><path d="M5 0.3L9.8 7.5H0.2Z" fill="#a6a6a6"/></svg>
<svg style="left:1058.5px;top:584.8px" width="10" height="8" viewBox="0 0 10 8"><path d="M0.2 0.5H9.8L5 7.5Z" fill="#a6a6a6"/></svg>
<div class="a" style="left:397px;top:606.8px;width:378px;height:6px;background:#858585"></div>
<div class="a" style="left:375.5px;top:627.4px;width:85px;height:25px;background:#fbfbfb;border:1px solid #d0d0d0;border-radius:4px"></div>
<div class="t" style="left:406.00px;top:634.11px;font-size:13.04px;line-height:13.04px;color:#000;transform:scaleX(1.0255);">Add</div>
<div class="a" style="left:473.2px;top:626.4px;width:602.4px;height:23.3px;background:#fff;border:1px solid #a0a0a0"></div>
<div class="t" style="left:476.20px;top:631.81px;font-size:13.04px;line-height:13.04px;color:#000;transform:scaleX(0.9505);">Sue Fuller</div>
<div class="a" style="left:476.2px;top:645px;width:56.5px;height:1.2px;background:#000"></div>
<div class="a" style="left:881px;top:647px;width:106px;height:50px;border:7px solid #f20030"></div>
<div class="a" style="left:890px;top:658.9px;width:85.8px;height:26px;background:#fbfbfb;border:1.5px solid #0f6cbd;border-radius:4px"></div>
<div class="t" style="left:924.30px;top:665.91px;font-size:13.04px;line-height:13.04px;color:#000;transform:scaleX(0.9127);">OK</div>
<div class="a" style="left:989.4px;top:658.9px;width:85.2px;height:26px;background:#fbfbfb;border:1px solid #d0d0d0;border-radius:4px"></div>
<svg style="left:1070px;top:675px" width="20" height="20" viewBox="0 0 20 20"><g fill="#ababab"><rect x="15" y="6.2" width="2.7" height="2.7"/><rect x="11.1" y="10.2" width="2.7" height="2.7"/><rect x="15" y="10.2" width="2.7" height="2.7"/><rect x="7" y="14.3" width="2.7" height="2.7"/><rect x="11.1" y="14.3" width="2.7" height="2.7"/><rect x="15" y="14.3" width="2.7" height="2.7"/></g></svg>
<div class="t" style="left:1013.30px;top:665.91px;font-size:13.04px;line-height:13.04px;color:#000;transform:scaleX(0.9212);">Cancel</div>
</body></html>
